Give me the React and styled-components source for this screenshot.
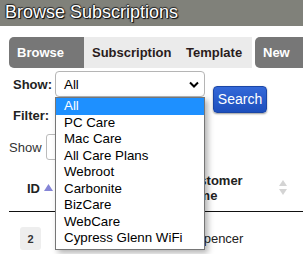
import React from 'react';
import styled, { createGlobalStyle } from 'styled-components';

const GlobalStyle = createGlobalStyle`
  html, body {
    margin: 0;
    padding: 0;
    overflow: hidden;
    background: #fff;
  }
  body {
    font-family: "Liberation Sans", Arial, sans-serif;
    color: #222;
  }
`;

const Page = styled.div`
  width: 303px;
  height: 254px;
  overflow: hidden;
`;

const TitleBar = styled.div`
  height: 26px;
  padding-left: 5px;
  background: #80817a;
  color: #fff;
  font-size: 18px;
  line-height: 25px;
  text-shadow: 1px 1px 1px #000, -1px 0 1px #222, 0 -1px 1px #222;
  white-space: nowrap;
`;

const Tabs = styled.div`
  display: flex;
  margin: 11px 0 0 9px;
  height: 31px;
`;

const TabGroup = styled.div`
  display: flex;
  background: #ebebeb;
  border-radius: 5px 0 0 5px;
  margin-right: 3px;
`;

const Tab = styled.div`
  display: flex;
  align-items: center;
  box-sizing: border-box;
  width: ${p => p.$width}px;
  padding: 0 8px;
  font-size: 13px;
  font-weight: bold;
  white-space: nowrap;
  background: ${p => (p.$active ? '#777' : 'transparent')};
  color: ${p => (p.$active ? '#fff' : '#2a1c1c')};
  border-radius: ${p => (p.$active ? '5px 0 0 5px' : '0')};
`;

const Form = styled.div`
  display: grid;
  grid-template-columns: 42px 150px auto;
  grid-template-rows: 26px 24px;
  row-gap: 6px;
  margin-top: 3px;
  padding-left: 13px;
`;

const Label = styled.div`
  align-self: center;
  font-size: 13px;
  font-weight: bold;
  color: #222;
  white-space: nowrap;
`;

const SelectWrap = styled.div`
  position: relative;
`;

const SelectBox = styled.div`
  box-sizing: border-box;
  height: 26px;
  display: flex;
  align-items: center;
  justify-content: space-between;
  padding: 0 5px 0 8px;
  border: 1px solid #b5b5b5;
  border-radius: 4px;
  font-size: 13.33px;
  color: #000;
`;

const OptionList = styled.div`
  position: absolute;
  top: 26px;
  left: 0;
  z-index: 10;
  box-sizing: border-box;
  width: 150px;
  padding-bottom: 2px;
  background: #fff;
  border: 1px solid #767676;
  box-shadow: 3px 3px 6px rgba(0, 0, 0, 0.3);
`;

const Option = styled.div`
  height: 16.5px;
  line-height: 16.5px;
  padding-left: 8px;
  font-size: 13.33px;
  white-space: nowrap;
  background: ${p => (p.$selected ? '#1e90ff' : 'transparent')};
  color: ${p => (p.$selected ? '#fff' : '#000')};
`;

const FilterInput = styled.div`
  box-sizing: border-box;
  width: 150px;
  height: 24px;
  border: 1px solid #b5b5b5;
  border-radius: 3px;
`;

const SearchButton = styled.button`
  grid-column: 3;
  grid-row: 1 / span 2;
  align-self: center;
  justify-self: start;
  margin-left: 8px;
  width: 54px;
  height: 27px;
  padding: 0;
  border: 1px solid #1b46a6;
  border-radius: 4px;
  background: linear-gradient(#3468d8, #1d4fbd);
  box-shadow: 0 1px 2px rgba(0, 0, 0, 0.4);
  color: #fff;
  font-family: "Liberation Sans", Arial, sans-serif;
  font-size: 14px;
`;

const LengthRow = styled.div`
  display: flex;
  align-items: center;
  gap: 4px;
  margin-top: 7px;
  padding-left: 9px;
  font-size: 13px;
  color: #333;
`;

const LengthInput = styled.div`
  box-sizing: border-box;
  width: 60px;
  height: 26px;
  border: 1px solid #bbb;
  border-radius: 3px;
`;

const Table = styled.div`
  margin: 5px 0 0 9px;
  width: 294px;
`;

const HeadRow = styled.div`
  display: grid;
  grid-template-columns: 173px 1fr;
  align-items: center;
  height: 46px;
  border-bottom: 1px solid #111;
  font-size: 13px;
  font-weight: bold;
  color: #222;
`;

const IdHead = styled.div`
  display: flex;
  align-items: center;
  gap: 4px;
  padding-left: 18px;
`;

const CustomerHead = styled.div`
  display: flex;
  align-items: center;
  justify-content: space-between;
  padding-right: 16px;
  line-height: 15px;
`;

const BodyRow = styled.div`
  display: grid;
  grid-template-columns: 173px 1fr;
  align-items: center;
  padding-top: 15px;
  font-size: 13px;
`;

const IdBadge = styled.div`
  display: flex;
  align-items: center;
  justify-content: center;
  width: 21px;
  height: 23px;
  margin-left: 11px;
  background: #eee;
  border-radius: 3px;
  font-size: 11px;
  font-weight: bold;
  color: #333;
`;

const NameCell = styled.div`
  padding-left: 13px;
  color: #222;
`;

const Chevron = () => (
  <svg width="10" height="7" viewBox="0 0 10 7">
    <polyline points="1,1.5 5,5.5 9,1.5" fill="none" stroke="#000" strokeWidth="2" />
  </svg>
);

const SortAsc = () => (
  <svg width="9" height="8" viewBox="0 0 9 8">
    <polygon points="4.5,0 9,7 0,7" fill="#8585d6" />
  </svg>
);

const SortBoth = () => (
  <svg width="8" height="16" viewBox="0 0 8 16">
    <polygon points="4,0 8,6 0,6" fill="#d4d4d4" />
    <polygon points="0,9 8,9 4,15" fill="#d4d4d4" />
  </svg>
);

const plans = [
  'All',
  'PC Care',
  'Mac Care',
  'All Care Plans',
  'Webroot',
  'Carbonite',
  'BizCare',
  'WebCare',
  'Cypress Glenn WiFi',
];

export default function App() {
  return (
    <Page>
      <GlobalStyle />
      <TitleBar>Browse Subscriptions</TitleBar>

      <Tabs>
        <TabGroup>
          <Tab $active $width={75}>Browse</Tab>
          <Tab $width={94}>Subscription</Tab>
          <Tab $width={74}>Template</Tab>
        </TabGroup>
        <TabGroup>
          <Tab $active $width={60}>New</Tab>
        </TabGroup>
      </Tabs>

      <Form>
        <Label>Show:</Label>
        <SelectWrap>
          <SelectBox>
            All
            <Chevron />
          </SelectBox>
          <OptionList>
            {plans.map((p, i) => (
              <Option key={p} $selected={i === 0}>{p}</Option>
            ))}
          </OptionList>
        </SelectWrap>
        <SearchButton>Search</SearchButton>
        <Label>Filter:</Label>
        <FilterInput />
      </Form>

      <LengthRow>
        Show
        <LengthInput />
      </LengthRow>

      <Table>
        <HeadRow>
          <IdHead>
            ID
            <SortAsc />
          </IdHead>
          <CustomerHead>
            <span>Customer<br />Name</span>
            <SortBoth />
          </CustomerHead>
        </HeadRow>
        <BodyRow>
          <IdBadge>2</IdBadge>
          <NameCell>Spencer</NameCell>
        </BodyRow>
      </Table>
    </Page>
  );
}
